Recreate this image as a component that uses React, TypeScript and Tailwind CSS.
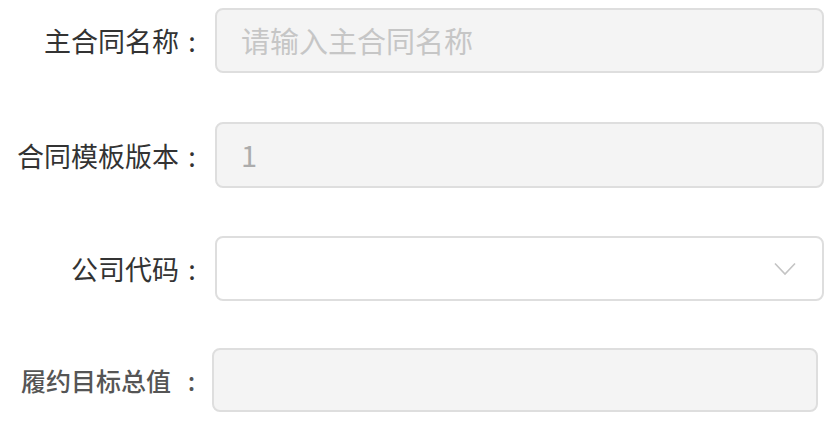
import React from 'react'

const font = { fontFamily: '"Noto Sans CJK SC", "Noto Sans", sans-serif' }

function Chevron() {
  return (
    <svg width="22" height="14" viewBox="0 0 22 14" fill="none">
      <polyline points="1,1.5 11,12 21,1.5" stroke="#c4c4c4" strokeWidth="1.6" />
    </svg>
  )
}

function Label({ text }: { text: string }) {
  return (
    <div className="flex items-center text-[27px] text-[#333333] leading-none">
      <span className="w-[179px] text-right">{text}</span>
      <span className="w-[26px] text-center">:</span>
    </div>
  )
}

export default function App() {
  return (
    <div className="w-[834px] h-[428px] bg-white overflow-hidden pt-[8px]" style={font}>
      {/* 主合同名称 */}
      <div className="flex items-center h-[65px]">
        <Label text="主合同名称" />
        <div className="ml-[10px] w-[609px] h-[65px] rounded-[8px] border-2 border-[#dedede] bg-[#f4f4f4] flex items-center pl-[24px] text-[29px] text-[#c6c6c6]">
          请输入主合同名称
        </div>
      </div>

      {/* 合同模板版本 */}
      <div className="flex items-center h-[66px] mt-[49px]">
        <Label text="合同模板版本" />
        <div className="ml-[10px] w-[609px] h-[66px] rounded-[8px] border-2 border-[#dedede] bg-[#f4f4f4] flex items-center pl-[24px] text-[29px] text-[#acacac]">
          1
        </div>
      </div>

      {/* 公司代码 */}
      <div className="flex items-center h-[65px] mt-[48px]">
        <Label text="公司代码" />
        <div className="ml-[10px] w-[609px] h-[65px] rounded-[8px] border-2 border-[#dedede] bg-white flex items-center justify-end pr-[26px]">
          <Chevron />
        </div>
      </div>

      {/* 履约目标总值 */}
      <div className="flex items-center h-[64px] mt-[47px]">
        <div className="flex items-center text-[25px] font-medium text-[#555555] leading-none">
          <span className="w-[171px] text-right">履约目标总值</span>
          <span className="w-[41px] text-center">:</span>
        </div>
        <div className="w-[606px] h-[64px] rounded-[8px] border-2 border-[#dedede] bg-[#f4f4f4]" />
      </div>
    </div>
  )
}
